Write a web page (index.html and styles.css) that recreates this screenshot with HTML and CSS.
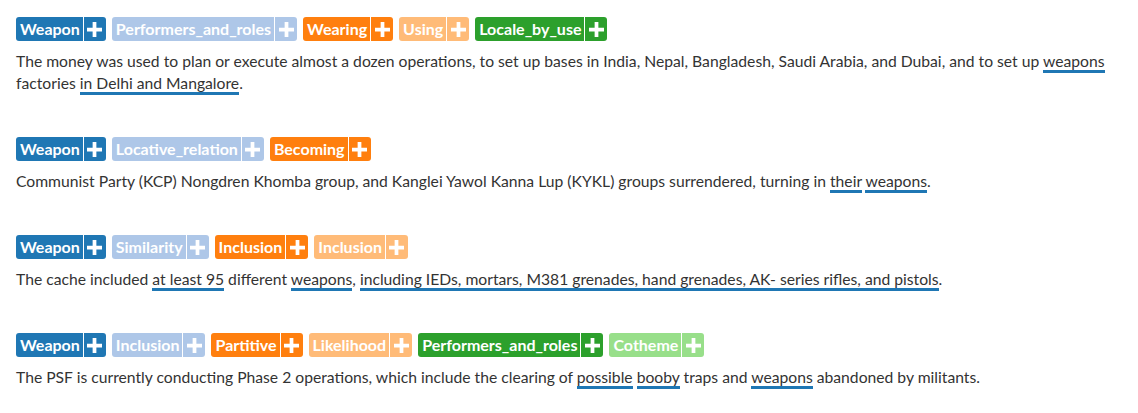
FILE: index.html
```html
<!DOCTYPE html>
<html>
<head>
<meta charset="utf-8">
<link rel="stylesheet" href="styles.css">
</head>
<body>
<div class="page">
  <div class="block">
    <div class="tags">
      <span class="tag c1"><span class="label">Weapon</span><span class="add"><svg viewBox="0 0 16 16"><path d="M6 0h4v6h6v4h-6v6h-4v-6h-6v-4h6z"/></svg></span></span>
      <span class="tag c2"><span class="label">Performers_and_roles</span><span class="add"><svg viewBox="0 0 16 16"><path d="M6 0h4v6h6v4h-6v6h-4v-6h-6v-4h6z"/></svg></span></span>
      <span class="tag c3"><span class="label">Wearing</span><span class="add"><svg viewBox="0 0 16 16"><path d="M6 0h4v6h6v4h-6v6h-4v-6h-6v-4h6z"/></svg></span></span>
      <span class="tag c4"><span class="label">Using</span><span class="add"><svg viewBox="0 0 16 16"><path d="M6 0h4v6h6v4h-6v6h-4v-6h-6v-4h6z"/></svg></span></span>
      <span class="tag c5"><span class="label">Locale_by_use</span><span class="add"><svg viewBox="0 0 16 16"><path d="M6 0h4v6h6v4h-6v6h-4v-6h-6v-4h6z"/></svg></span></span>
    </div>
    <p class="text">The money was used to plan or execute almost a dozen operations, to set up bases in India, Nepal, Bangladesh, Saudi Arabia, and Dubai, and to set up <span class="u">weapons</span> factories <span class="u">in Delhi and Mangalore</span>.</p>
  </div>

  <div class="block">
    <div class="tags">
      <span class="tag c1"><span class="label">Weapon</span><span class="add"><svg viewBox="0 0 16 16"><path d="M6 0h4v6h6v4h-6v6h-4v-6h-6v-4h6z"/></svg></span></span>
      <span class="tag c2"><span class="label">Locative_relation</span><span class="add"><svg viewBox="0 0 16 16"><path d="M6 0h4v6h6v4h-6v6h-4v-6h-6v-4h6z"/></svg></span></span>
      <span class="tag c3"><span class="label">Becoming</span><span class="add"><svg viewBox="0 0 16 16"><path d="M6 0h4v6h6v4h-6v6h-4v-6h-6v-4h6z"/></svg></span></span>
    </div>
    <p class="text">Communist Party (KCP) Nongdren Khomba group, and Kanglei Yawol Kanna Lup (KYKL) groups surrendered, turning in <span class="u">their</span> <span class="u">weapons</span>.</p>
  </div>

  <div class="block">
    <div class="tags">
      <span class="tag c1"><span class="label">Weapon</span><span class="add"><svg viewBox="0 0 16 16"><path d="M6 0h4v6h6v4h-6v6h-4v-6h-6v-4h6z"/></svg></span></span>
      <span class="tag c2"><span class="label">Similarity</span><span class="add"><svg viewBox="0 0 16 16"><path d="M6 0h4v6h6v4h-6v6h-4v-6h-6v-4h6z"/></svg></span></span>
      <span class="tag c3"><span class="label">Inclusion</span><span class="add"><svg viewBox="0 0 16 16"><path d="M6 0h4v6h6v4h-6v6h-4v-6h-6v-4h6z"/></svg></span></span>
      <span class="tag c4"><span class="label">Inclusion</span><span class="add"><svg viewBox="0 0 16 16"><path d="M6 0h4v6h6v4h-6v6h-4v-6h-6v-4h6z"/></svg></span></span>
    </div>
    <p class="text">The cache included <span class="u">at least 95</span> different <span class="u">weapons</span>, <span class="u">including IEDs, mortars, M381 grenades, hand grenades, AK- series rifles, and pistols</span>.</p>
  </div>

  <div class="block">
    <div class="tags">
      <span class="tag c1"><span class="label">Weapon</span><span class="add"><svg viewBox="0 0 16 16"><path d="M6 0h4v6h6v4h-6v6h-4v-6h-6v-4h6z"/></svg></span></span>
      <span class="tag c2"><span class="label">Inclusion</span><span class="add"><svg viewBox="0 0 16 16"><path d="M6 0h4v6h6v4h-6v6h-4v-6h-6v-4h6z"/></svg></span></span>
      <span class="tag c3"><span class="label">Partitive</span><span class="add"><svg viewBox="0 0 16 16"><path d="M6 0h4v6h6v4h-6v6h-4v-6h-6v-4h6z"/></svg></span></span>
      <span class="tag c4"><span class="label">Likelihood</span><span class="add"><svg viewBox="0 0 16 16"><path d="M6 0h4v6h6v4h-6v6h-4v-6h-6v-4h6z"/></svg></span></span>
      <span class="tag c5"><span class="label">Performers_and_roles</span><span class="add"><svg viewBox="0 0 16 16"><path d="M6 0h4v6h6v4h-6v6h-4v-6h-6v-4h6z"/></svg></span></span>
      <span class="tag c6"><span class="label">Cotheme</span><span class="add"><svg viewBox="0 0 16 16"><path d="M6 0h4v6h6v4h-6v6h-4v-6h-6v-4h6z"/></svg></span></span>
    </div>
    <p class="text">The PSF is currently conducting Phase 2 operations, which include the clearing of <span class="u">possible</span> <span class="u">booby</span> traps and <span class="u">weapons</span> abandoned by militants.</p>
  </div>
</div>
</body>
</html>
```

FILE: styles.css
```css
html, body {
  margin: 0;
  padding: 0;
  background: #ffffff;
}

.page {
  padding: 17px 16px 0 16px;
  font-family: Lato, "Open Sans", sans-serif;
  color: #333333;
}

.block {
  margin-bottom: 43px;
}

.tags {
  display: flex;
  gap: 6px;
  height: 24px;
}

.tag {
  display: inline-flex;
  height: 24px;
  border-radius: 3px;
  overflow: hidden;
  color: #ffffff;
  font-weight: 700;
  font-size: 16px;
}

.label {
  display: flex;
  align-items: center;
  padding: 0 3px 0 4px;
  line-height: 24px;
}

.add {
  display: flex;
  align-items: center;
  justify-content: center;
  width: 22px;
  border-left: 1px solid #ffffff;
}

.add svg {
  width: 15px;
  height: 15px;
  fill: #ffffff;
}

.c1 { background: #1f77b4; }
.c2 { background: #aec7e8; }
.c3 { background: #ff7f0e; }
.c4 { background: #ffbb78; }
.c5 { background: #2ca02c; }
.c6 { background: #98df8a; }

.text {
  margin: 9px 0 0 0;
  font-size: 15.7px;
  line-height: 22px;
}

.u {
  border-bottom: 3px solid #1f77b4;
}
```
